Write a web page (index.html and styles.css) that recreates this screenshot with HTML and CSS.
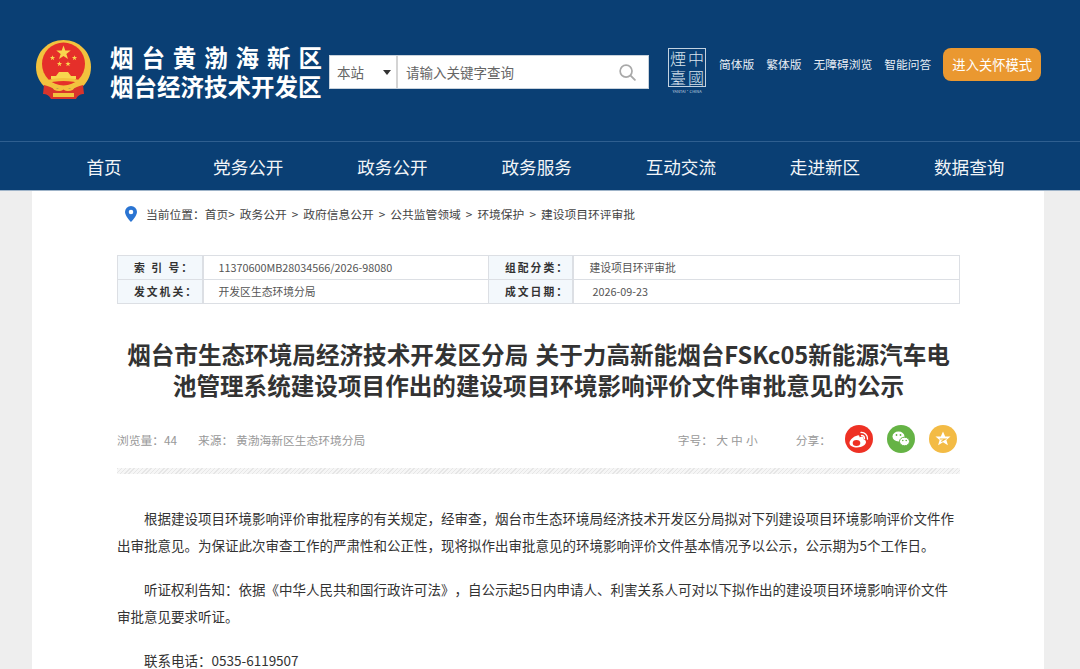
FILE: index.html
```html
<!DOCTYPE html>
<html lang="zh-CN">

<head>
    <title>烟台黄渤海新区 烟台经济技术开发区</title>
    <meta charset="UTF-8">
    <meta name="viewport" content="width=device-width, initial-scale=1">
    <link rel="stylesheet" href="styles.css">
</head>

<body>
    <div class="page">
        <header class="header">
            <svg class="emblem" viewBox="0 0 57 60">
                <defs>
                    <polygon id="star" points="0,-5 1.200,-1.600 4.800,-1.600 1.900,.6 3,4 0,2 -3,4 -1.900,.6 -4.800,-1.600 -1.200,-1.600" fill="#f8d64e"/>
                </defs>
                <path d="M28.500 0C13 0 1 12 1 27c0 9 4 16 10 21h35c6-5 10-12 10-21C56 12 44 0 28.500 0z" fill="#f2c23e"/>
                <circle cx="28.500" cy="24" r="21.500" fill="#e52f2a"/>
                <use href="#star" transform="translate(28.500 13) scale(1.500)"/>
                <use href="#star" transform="translate(17.500 18) scale(.55)"/>
                <use href="#star" transform="translate(39.500 18) scale(.55)"/>
                <use href="#star" transform="translate(24.500 24) scale(.55)"/>
                <use href="#star" transform="translate(33 24) scale(.55)"/>
                <path d="M21 36l3-4h9l3 4z" fill="#f8d64e"/>
                <path d="M16 36h25v3H16z" fill="#f8d64e"/>
                <path d="M9 44c6-2 13-3 19.500-3S42 42 48 44v-3c-6-2-13-3-19.500-3S15 39 9 41z" fill="#f2c23e"/>
                <path d="M9 45c5 1 8 3 10 4h19c2-1 5-3 10-4l1 9c-3 0-6 1-8 5H16c-2-4-5-5-8-5z" fill="#d9342b"/>
                <path d="M18 53h21v4H18zM16 46c4 3 9 3 12.500 0 3.500 3 8.500 3 12.500 0-3 6-9 6-12.500 3.500C25 52 19 52 16 46z" fill="#f2c23e"/>
            </svg>
            <div class="site-name">
                <div class="site-name-top">烟台黄渤海新区</div>
                <div class="site-name-bottom">烟台经济技术开发区</div>
            </div>
            <form class="search">
                <div class="search-scope">本站<span class="caret"></span></div>
                <div class="search-input">请输入关键字查询</div>
                <svg class="search-icon" viewBox="0 0 18 18">
                    <circle cx="7.500" cy="7.500" r="6.300" fill="none" stroke="#a9a9a9" stroke-width="1.800"/>
                    <path d="M12.300 12.300l4.500 4.500" stroke="#a9a9a9" stroke-width="2" stroke-linecap="round"/>
                </svg>
            </form>
            <div class="seal">
                <div class="seal-box">
                    <span>煙</span><span>中</span><span>臺</span><span>國</span>
                </div>
                <div class="seal-en">YANTAI·CHINA</div>
            </div>
            <nav class="top-links">
                <a>简体版</a>
                <a>繁体版</a>
                <a>无障碍浏览</a>
                <a>智能问答</a>
            </nav>
            <a class="care-btn">进入关怀模式</a>
        </header>

        <nav class="nav">
            <a>首页</a>
            <a>党务公开</a>
            <a>政务公开</a>
            <a>政务服务</a>
            <a>互动交流</a>
            <a>走进新区</a>
            <a>数据查询</a>
        </nav>

        <main class="main">
            <div class="crumbs">
                <svg class="pin" viewBox="0 0 12 16">
                    <path d="M6 0a6 6 0 0 0-6 6c0 4 6 10 6 10s6-6 6-10a6 6 0 0 0-6-6zm0 8.300a2.300 2.300 0 1 1 0-4.600 2.300 2.300 0 0 1 0 4.600z" fill="#2a74d2"/>
                </svg>
                <span>当前位置：</span>
                <span>首页&gt;</span>
                <span>政务公开</span>
                <span>&gt;</span>
                <span>政府信息公开</span>
                <span>&gt;</span>
                <span>公共监管领域</span>
                <span>&gt;</span>
                <span>环境保护</span>
                <span>&gt;</span>
                <span>建设项目环评审批</span>
            </div>

            <table class="info">
                <tr>
                    <th class="col-a">索 引 号：</th>
                    <td class="col-b">11370600MB28034566/2026-98080</td>
                    <th class="col-c">组配分类：</th>
                    <td>建设项目环评审批</td>
                </tr>
                <tr>
                    <th class="col-a">发文机关：</th>
                    <td class="col-b">开发区生态环境分局</td>
                    <th class="col-c">成文日期：</th>
                    <td class="date">2026-09-23</td>
                </tr>
            </table>

            <h1 class="title">烟台市生态环境局经济技术开发区分局 关于力高新能烟台FSKc05新能源汽车电池管理系统建设项目作出的建设项目环境影响评价文件审批意见的公示</h1>

            <div class="meta">
                <span class="views">浏览量：44</span>
                <span class="source">来源： 黄渤海新区生态环境分局</span>
                <span class="font-size">字号： 大 中 小</span>
                <span class="share-label">分享：</span>
                <svg class="share" viewBox="0 0 28 28">
                    <circle cx="14" cy="14" r="14" fill="#ee3124"/>
                    <path d="M12.500 10.500c-4 .8-8 4.500-8 7.500 0 2.800 3.500 4.500 7.500 4.500 5 0 9-2.800 9-5.500 0-1.800-1.500-2.500-2.500-2.800.5-1.500.2-3-2.800-2.300l-1.200.4c.2-1.500-.6-2.600-2-1.800z" fill="#fff"/>
                    <ellipse cx="11.500" cy="18" rx="3.800" ry="2.900" fill="#ee3124"/>
                    <path d="M16 7.500a6 6 0 0 1 6.500 6.500M16.500 10.500a3 3 0 0 1 3 3" fill="none" stroke="#fff" stroke-width="1.300" stroke-linecap="round"/>
                </svg>
                <svg class="share" viewBox="0 0 28 28">
                    <circle cx="14" cy="14" r="14" fill="#65b345"/>
                    <ellipse cx="11.500" cy="11.500" rx="6" ry="5" fill="#fff"/>
                    <ellipse cx="17.500" cy="16.500" rx="5" ry="4.300" fill="#fff" stroke="#65b345"/>
                    <circle cx="15.800" cy="15.500" r=".8" fill="#65b345"/>
                    <circle cx="19.200" cy="15.500" r=".8" fill="#65b345"/>
                    <circle cx="9.500" cy="10" r=".9" fill="#65b345"/>
                    <circle cx="13.500" cy="10" r=".9" fill="#65b345"/>
                </svg>
                <svg class="share" viewBox="0 0 28 28">
                    <circle cx="14" cy="14" r="14" fill="#f3bb45"/>
                    <path d="M14 6.500l2.200 5h5.300l-4.100 3.400 1.500 5.300-4.900-3-4.900 3 1.500-5.300-4.100-3.400h5.300z" fill="#fff"/>
                    <path d="M10.800 14h5.500l-4 2.500" fill="none" stroke="#f3bb45" stroke-width="1.200"/>
                </svg>
            </div>
            <div class="stripes"></div>

            <div class="content">
                <p>根据建设项目环境影响评价审批程序的有关规定，经审查，烟台市生态环境局经济技术开发区分局拟对下列建设项目环境影响评价文件作出审批意见。为保证此次审查工作的严肃性和公正性，现将拟作出审批意见的环境影响评价文件基本情况予以公示，公示期为5个工作日。</p>
                <p>听证权利告知：依据《中华人民共和国行政许可法》，自公示起5日内申请人、利害关系人可对以下拟作出的建设项目环境影响评价文件审批意见要求听证。</p>
                <p>联系电话：0535-6119507</p>
            </div>
        </main>
    </div>
</body>

</html>
```

FILE: styles.css
```css
* {
    margin: 0px;
    padding: 0px;
    box-sizing: border-box;
}

body {
    background: #eeeeee;
    font-family: "Noto Sans CJK SC", sans-serif;
    color: #333;
    text-spacing-trim: space-all;
}

.page {
    height: 669px;
    overflow: hidden;
}

.header {
    background: #0a3f74;
    height: 141px;
    display: flex;
    align-items: flex-start;
    padding-left: 35px;
}

.emblem {
    width: 57px;
    height: 60px;
    margin-top: 40px;
    flex: none;
}

.site-name {
    width: 213px;
    margin: 43px 0 0 18px;
    color: #fff;
    font-weight: 700;
    font-size: 23.500px;
    line-height: 29px;
    white-space: nowrap;
    flex: none;
}

.site-name-top {
    letter-spacing: 7.900px;
}

.search {
    width: 320px;
    height: 34px;
    margin: 55px 0 0 6px;
    background: #fff;
    border: 1px solid #c8d2dc;
    display: flex;
    align-items: center;
    flex: none;
}

.search-scope {
    width: 68px;
    height: 32px;
    line-height: 32px;
    padding-left: 7px;
    border-right: 2px solid #d4d4d4;
    font-size: 13.500px;
    color: #666;
    position: relative;
}

.caret {
    position: absolute;
    right: 5px;
    top: 14px;
    border: 4px solid transparent;
    border-top: 5px solid #333;
    border-bottom: 0;
}

.search-input {
    flex: 1;
    padding-left: 8px;
    font-size: 13.500px;
    color: #666;
}

.search-icon {
    width: 17px;
    height: 17px;
    margin-right: 12px;
}

.seal {
    width: 38px;
    margin: 48px 0 0 19px;
    flex: none;
}

.seal-box {
    height: 39px;
    border: 1px solid #c3d2e0;
    display: grid;
    grid-template-columns: 1fr 1fr;
    grid-template-rows: 1fr 1fr;
    color: #dbe5ee;
    font-family: "Noto Sans CJK TC", sans-serif;
    font-size: 16px;
    font-weight: 300;
    line-height: 18px;
    text-align: center;
}

.seal-en {
    font-size: 4px;
    line-height: 8px;
    color: #c3d2e0;
    text-align: center;
    white-space: nowrap;
}

.top-links {
    display: flex;
    gap: 12px;
    margin: 55px 0 0 13px;
    font-size: 11.750px;
    line-height: 18px;
    color: #e8eef4;
    flex: none;
}

.care-btn {
    width: 98px;
    height: 33px;
    margin: 48px 0 0 12px;
    background: #ea9830;
    border-radius: 8px;
    color: #fff;
    font-size: 13.300px;
    line-height: 33px;
    text-align: center;
    flex: none;
}

.nav {
    height: 50px;
    background: #0a3f74;
    border-top: 1px solid #2f5f90;
    border-bottom: 1px solid #9fb4c9;
    padding-left: 32px;
    display: grid;
    grid-template-columns: repeat(7, 144.200px);
    width: 100%;
}

.nav a {
    color: #f2f5f8;
    font-size: 17.600px;
    line-height: 50px;
    text-align: center;
}

.main {
    width: 1012px;
    margin-left: 32px;
    background: #fff;
    padding: 0 84px 0 85px;
    height: 479px;
}

.crumbs {
    height: 64px;
    display: flex;
    align-items: flex-start;
    padding: 14px 0 0 8px;
    gap: 5px;
    font-size: 11.750px;
    line-height: 18px;
    color: #444;
}

.pin {
    width: 12px;
    height: 16px;
    margin: 1px 4px 0 0;
}

.crumbs span:nth-of-type(1) {
    margin-right: -5px;
}

.info {
    width: 843px;
    height: 49px;
    border-collapse: collapse;
    table-layout: fixed;
    font-size: 10.800px;
    color: #555;
}

.info th,
.info td {
    border: 1px solid #dcdfe4;
    text-align: left;
    line-height: 20px;
    padding-bottom: 1px;
}

.info th {
    background: #f3f8fc;
    color: #333;
    letter-spacing: 2px;
    font-weight: 700;
    border-right-width: 2px;
    padding-left: 16px;
}

.col-a {
    width: 85px;
}

.col-b {
    width: 286px;
}

.col-c {
    width: 84px;
}

.info td {
    padding-left: 16px;
}

.info .date {
    padding-left: 19px;
}

.info .col-b {
    padding-left: 15px;
}

.title {
    margin-top: 35px;
    padding: 0 8px;
    font-size: 23.600px;
    line-height: 31px;
    font-weight: 700;
    word-spacing: 2px;
    text-align: center;
    color: #333;
    height: 62px;
}

.meta {
    margin-top: 24px;
    height: 28px;
    display: flex;
    align-items: center;
    font-size: 11.750px;
    color: #999;
}

.source {
    margin-left: 21px;
}

.font-size {
    margin-left: auto;
    word-spacing: .5px;
}

.share-label {
    margin: 0 14px 0 38px;
}

.share {
    width: 28px;
    height: 28px;
    margin-right: 14px;
}

.share:last-child {
    margin-right: 3px;
}

.stripes {
    margin-top: 15px;
    height: 6px;
    background: repeating-linear-gradient(135deg, #e6e6e6 0, #e6e6e6 1px, #f6f6f6 1px, #f6f6f6 3px);
}

.content {
    margin-top: 31px;
    padding-right: 4px;
    font-size: 13.500px;
    line-height: 27px;
    color: #333;
}

.content p {
    text-indent: 27px;
    margin-bottom: 17px;
}
```
